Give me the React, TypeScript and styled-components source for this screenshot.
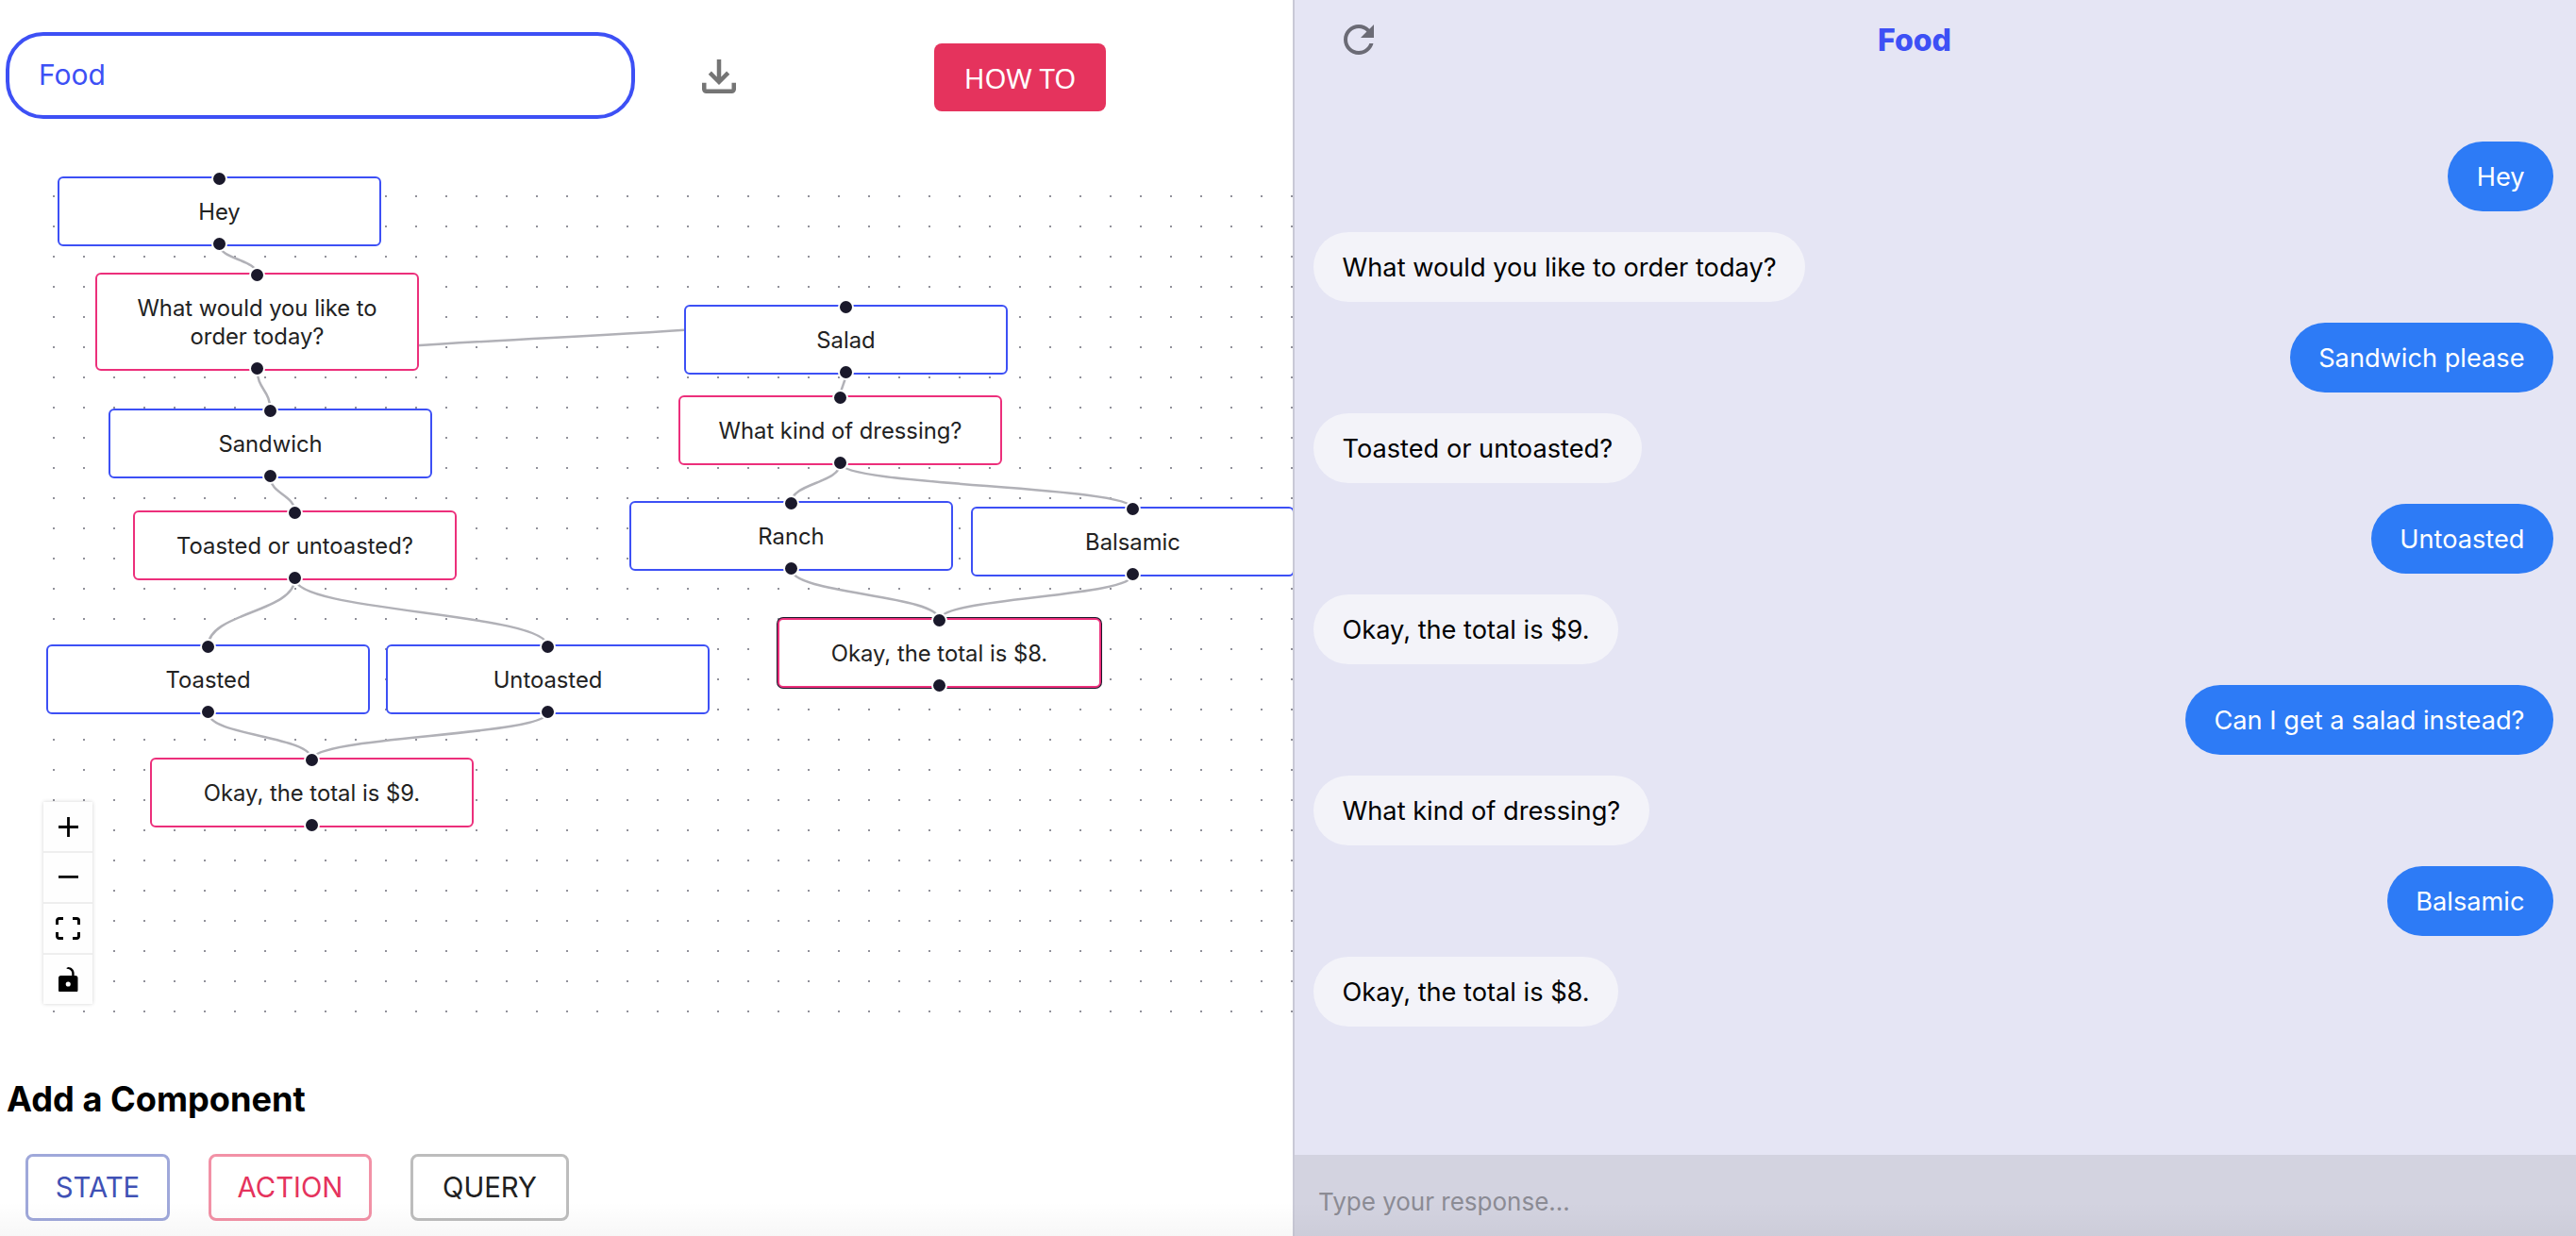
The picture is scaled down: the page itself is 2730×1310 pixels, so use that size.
import React from "react";
import styled, { createGlobalStyle } from "styled-components";

// canvas origin on the page, node coordinates below are page pixels
const ORIGIN_X = 28;
const ORIGIN_Y = 178;
const CANVAS_WIDTH = 1342;
const CANVAS_HEIGHT = 902;
const NODE_WIDTH = 343;

type NodeKind = "state" | "action";

interface FlowNodeData {
	id: string;
	kind: NodeKind;
	text: React.ReactNode;
	x: number;
	y: number;
	height: number;
	selected?: boolean;
}

const nodes: FlowNodeData[] = [
	{ id: "hey", kind: "state", text: "Hey", x: 61, y: 187, height: 74 },
	{ id: "order", kind: "action", text: <>What would you like to<br />order today?</>, x: 101, y: 289, height: 104 },
	{ id: "sandwich", kind: "state", text: "Sandwich", x: 115, y: 433, height: 74 },
	{ id: "toastedQ", kind: "action", text: "Toasted or untoasted?", x: 141, y: 541, height: 74 },
	{ id: "toasted", kind: "state", text: "Toasted", x: 49, y: 683, height: 74 },
	{ id: "untoasted", kind: "state", text: "Untoasted", x: 409, y: 683, height: 74 },
	{ id: "total9", kind: "action", text: "Okay, the total is $9.", x: 159, y: 803, height: 74 },
	{ id: "salad", kind: "state", text: "Salad", x: 725, y: 323, height: 74 },
	{ id: "dressing", kind: "action", text: "What kind of dressing?", x: 719, y: 419, height: 74 },
	{ id: "ranch", kind: "state", text: "Ranch", x: 667, y: 531, height: 74 },
	{ id: "balsamic", kind: "state", text: "Balsamic", x: 1029, y: 537, height: 74 },
	{ id: "total8", kind: "action", text: "Okay, the total is $8.", x: 824, y: 655, height: 74, selected: true },
];

const edges: [string, string][] = [
	["hey", "order"],
	["order", "sandwich"],
	["order", "salad"],
	["sandwich", "toastedQ"],
	["toastedQ", "toasted"],
	["toastedQ", "untoasted"],
	["toasted", "total9"],
	["untoasted", "total9"],
	["salad", "dressing"],
	["dressing", "ranch"],
	["dressing", "balsamic"],
	["ranch", "total8"],
	["balsamic", "total8"],
];

const messages: { from: "user" | "bot"; text: string }[] = [
	{ from: "user", text: "Hey" },
	{ from: "bot", text: "What would you like to order today?" },
	{ from: "user", text: "Sandwich please" },
	{ from: "bot", text: "Toasted or untoasted?" },
	{ from: "user", text: "Untoasted" },
	{ from: "bot", text: "Okay, the total is $9." },
	{ from: "user", text: "Can I get a salad instead?" },
	{ from: "bot", text: "What kind of dressing?" },
	{ from: "user", text: "Balsamic" },
	{ from: "bot", text: "Okay, the total is $8." },
];

const GlobalStyle = createGlobalStyle`
	html, body {
		margin: 0;
		padding: 0;
		background: #fff;
	}
	* {
		box-sizing: border-box;
	}
`;

const Page = styled.div`
	position: relative;
	display: grid;
	grid-template-columns: 1370px 1fr;
	width: 2730px;
	height: 1310px;
	overflow: hidden;
	font-family: Inter, "Liberation Sans", sans-serif;
`;

const BottomFade = styled.div`
	position: absolute;
	left: 0;
	right: 0;
	bottom: 0;
	height: 36px;
	background: linear-gradient(rgba(0, 0, 0, 0), rgba(0, 0, 0, 0.03));
	pointer-events: none;
`;

const Editor = styled.div`
	display: flex;
	flex-direction: column;
`;

const TopBar = styled.div`
	display: flex;
	align-items: center;
	height: 178px;
	padding: 0 0 16px 6px;
`;

const NameInput = styled.input`
	width: 667px;
	height: 92px;
	padding: 0 31px 3px;
	border: 4px solid #3d50f5;
	border-radius: 40px;
	outline: none;
	background: #fff;
	color: #3d50f5;
	font-family: inherit;
	font-size: 30px;
	margin-bottom: 2px;
`;

const IconButton = styled.button`
	display: flex;
	padding: 0;
	border: none;
	background: none;
	margin-left: 62px;
	margin-right: 201px;
	color: #757575;
`;

const HowToButton = styled.button`
	width: 182px;
	height: 72px;
	margin-top: 2px;
	border: none;
	border-radius: 8px;
	background: #e5335d;
	color: #fff;
	font-family: "Noto Sans", sans-serif;
	font-size: 29.5px;
`;

const Canvas = styled.div`
	position: relative;
	flex: none;
	width: ${CANVAS_WIDTH}px;
	height: ${CANVAS_HEIGHT}px;
	margin-left: ${ORIGIN_X}px;
	overflow: hidden;
	background-image: radial-gradient(circle, #91919a 1.1px, transparent 1.3px);
	background-size: 32px 32px;
	background-position: 13px 14px;
`;

const EdgeLayer = styled.svg`
	position: absolute;
	inset: 0;
	width: 100%;
	height: 100%;
`;

const Edge = styled.path`
	fill: none;
	stroke: #b1b1b7;
	stroke-width: 2.5;
`;

const Node = styled.div<{ $kind: NodeKind; $x: number; $y: number; $h: number; $selected?: boolean }>`
	position: absolute;
	left: ${(p) => p.$x - ORIGIN_X}px;
	top: ${(p) => p.$y - ORIGIN_Y}px;
	display: flex;
	align-items: center;
	justify-content: center;
	width: ${NODE_WIDTH}px;
	height: ${(p) => p.$h}px;
	padding-top: 1px;
	border: 2px solid ${(p) => (p.$kind === "state" ? "#3d50f5" : "#ec2f7b")};
	border-radius: 6px;
	background: #fff;
	color: #222;
	font-size: 23.8px;
	line-height: 30px;
	text-align: center;
	box-shadow: ${(p) => (p.$selected ? "0 0 0 1px #1a192b" : "none")};
`;

const Handle = styled.span<{ $side: "top" | "bottom" }>`
	position: absolute;
	left: 50%;
	${(p) => (p.$side === "top" ? "top: -8px;" : "bottom: -8px;")}
	width: 17px;
	height: 17px;
	margin-left: -8.5px;
	border: 2px solid #fff;
	border-radius: 50%;
	background: #1a192b;
`;

const Controls = styled.div`
	position: absolute;
	left: 18px;
	bottom: 16px;
	display: flex;
	flex-direction: column;
	width: 52px;
	box-shadow: 0 0 4px rgba(0, 0, 0, 0.18);
`;

const ControlButton = styled.button`
	display: flex;
	align-items: center;
	justify-content: center;
	width: 52px;
	height: 54px;
	padding: 0;
	border: none;
	border-bottom: 2px solid #eee;
	background: #fefefe;

	&:last-child {
		border-bottom: none;
		height: 52px;
	}
`;

const ControlIcon = styled.svg<{ $w: number }>`
	display: block;
	width: ${(p) => p.$w}px;
	fill: #000;
`;

const SectionTitle = styled.h2`
	margin: 64px 0 0 7px;
	color: #000;
	font-size: 36.2px;
	font-weight: 700;
	line-height: 42px;
`;

const Palette = styled.div`
	display: flex;
	gap: 41px;
	margin: 37px 0 0 27px;
`;

const paletteColors = {
	state: { text: "#3f51b5", border: "#9fa8da", width: 153 },
	action: { text: "#e5335d", border: "#f291a6", width: 173 },
	query: { text: "#212121", border: "#bdbdbd", width: 168 },
};

const PaletteButton = styled.button<{ $kind: keyof typeof paletteColors }>`
	width: ${(p) => paletteColors[p.$kind].width}px;
	height: 71px;
	padding: 0;
	border: 3px solid ${(p) => paletteColors[p.$kind].border};
	border-radius: 8px;
	background: #fff;
	color: ${(p) => paletteColors[p.$kind].text};
	font-family: inherit;
	font-size: 29.3px;
`;

const Chat = styled.div`
	display: flex;
	flex-direction: column;
	border-left: 2px solid #c9c9d6;
	background: #e5e5f4;
`;

const ChatHeader = styled.div`
	display: flex;
	align-items: center;
	height: 84px;
	padding-left: 44px;
	color: #6b6b75;
`;

const ChatTitle = styled.div`
	margin-left: 526px;
	color: #3d50f5;
	font-size: 32px;
	font-weight: 800;
`;

const MessageList = styled.div`
	display: flex;
	flex: 1;
	flex-direction: column;
	gap: 22px;
	padding: 66px 24px 0 20px;
`;

const Bubble = styled.div<{ $from: "user" | "bot" }>`
	display: flex;
	align-items: center;
	align-self: ${(p) => (p.$from === "user" ? "flex-end" : "flex-start")};
	height: 74px;
	padding: 0 30.5px;
	border-radius: 37px;
	background: ${(p) => (p.$from === "user" ? "#2d7bf6" : "#f3f3f9")};
	color: ${(p) => (p.$from === "user" ? "#fff" : "#000")};
	font-size: 27.2px;
`;

const ReplyBar = styled.div`
	height: 86px;
	padding: 0 25px;
	background: #d3d3e0;
`;

const ReplyInput = styled.input`
	width: 100%;
	height: 100%;
	padding: 13px 0 0;
	border: none;
	outline: none;
	background: transparent;
	font-family: inherit;
	font-size: 26px;

	&::placeholder {
		color: #8b8b94;
	}
`;

const byId = (id: string) => nodes.find((n) => n.id === id) as FlowNodeData;

const edgePath = (from: string, to: string) => {
	const s = byId(from);
	const t = byId(to);
	const sx = s.x + NODE_WIDTH / 2;
	const sy = s.y + s.height - 2;
	const tx = t.x + NODE_WIDTH / 2;
	const ty = t.y + 2;
	const midY = (sy + ty) / 2;
	return `M${sx},${sy} C${sx},${midY} ${tx},${midY} ${tx},${ty}`;
};

const App = () => {
	return (
		<Page>
			<GlobalStyle />
			<Editor>
				<TopBar>
					<NameInput defaultValue="Food" />
					<IconButton aria-label="Download">
						<svg width="54" height="54" viewBox="0 0 24 24" fill="currentColor">
							<path d="M18 15v3H6v-3H4v3c0 1.1.9 2 2 2h12c1.1 0 2-.9 2-2v-3h-2zm-1-4-1.41-1.41L13 12.17V4h-2v8.17L8.41 9.59 7 11l5 5 5-5z" />
						</svg>
					</IconButton>
					<HowToButton>HOW TO</HowToButton>
				</TopBar>
				<Canvas>
					<EdgeLayer viewBox={`${ORIGIN_X} ${ORIGIN_Y} ${CANVAS_WIDTH} ${CANVAS_HEIGHT}`}>
						{edges.map(([from, to]) => (
							<Edge key={from + to} d={edgePath(from, to)} />
						))}
					</EdgeLayer>
					{nodes.map((n) => (
						<Node key={n.id} $kind={n.kind} $x={n.x} $y={n.y} $h={n.height} $selected={n.selected}>
							<Handle $side="top" />
							<span>{n.text}</span>
							<Handle $side="bottom" />
						</Node>
					))}
					<Controls>
						<ControlButton aria-label="Zoom in">
							<ControlIcon $w={21} viewBox="0 0 32 32">
								<path d="M32 18.133H18.133V32h-4.266V18.133H0v-4.266h13.867V0h4.266v13.867H32z" />
							</ControlIcon>
						</ControlButton>
						<ControlButton aria-label="Zoom out">
							<ControlIcon $w={21} viewBox="0 0 32 5">
								<path d="M0 0h32v4.2H0z" />
							</ControlIcon>
						</ControlButton>
						<ControlButton aria-label="Fit view">
							<ControlIcon $w={26} viewBox="0 0 32 30">
								<path d="M3.692 4.63c0-.53.4-.938.939-.938h5.215V0H4.708C2.13 0 0 2.054 0 4.63v5.216h3.692V4.631zM27.354 0h-5.2v3.692h5.17c.53 0 .984.4.984.939v5.215H32V4.631A4.624 4.624 0 0027.354 0zm.954 24.83c0 .532-.4.94-.939.94h-5.215v3.768h5.215c2.577 0 4.631-2.13 4.631-4.707v-5.139h-3.692v5.139zm-23.677.94c-.531 0-.939-.4-.939-.94v-5.138H0v5.139c0 2.577 2.13 4.707 4.708 4.707h5.138V25.77H4.631z" />
							</ControlIcon>
						</ControlButton>
						<ControlButton aria-label="Toggle interactivity">
							<ControlIcon $w={21} viewBox="0 0 25 32">
								<path d="M21.333 10.667H19.81V7.619C19.81 3.429 16.38 0 12.19 0c-4.114 1.828-1.37 2.133.305 2.438 1.676.305 4.42 2.59 4.42 5.181v3.048H3.047A3.056 3.056 0 000 13.714v15.238A3.056 3.056 0 003.048 32h18.285a3.056 3.056 0 003.048-3.048V13.714a3.056 3.056 0 00-3.048-3.047zM12.19 24.533a3.056 3.056 0 01-3.047-3.047 3.056 3.056 0 013.047-3.048 3.056 3.056 0 013.048 3.048 3.056 3.056 0 01-3.048 3.047z" />
							</ControlIcon>
						</ControlButton>
					</Controls>
				</Canvas>
				<SectionTitle>Add a Component</SectionTitle>
				<Palette>
					<PaletteButton $kind="state">STATE</PaletteButton>
					<PaletteButton $kind="action">ACTION</PaletteButton>
					<PaletteButton $kind="query">QUERY</PaletteButton>
				</Palette>
			</Editor>
			<Chat>
				<ChatHeader>
					<svg width="48" height="48" viewBox="0 0 24 24" fill="currentColor">
						<path d="M17.65 6.35C16.2 4.9 14.21 4 12 4c-4.42 0-7.99 3.58-7.99 8s3.57 8 7.99 8c3.73 0 6.84-2.55 7.73-6h-2.08c-.82 2.33-3.04 4-5.65 4-3.31 0-6-2.69-6-6s2.69-6 6-6c1.66 0 3.14.69 4.22 1.78L13 11h7V4l-2.35 2.35z" />
					</svg>
					<ChatTitle>Food</ChatTitle>
				</ChatHeader>
				<MessageList>
					{messages.map((m, i) => (
						<Bubble key={i} $from={m.from}>{m.text}</Bubble>
					))}
				</MessageList>
				<ReplyBar>
					<ReplyInput placeholder="Type your response..." />
				</ReplyBar>
			</Chat>
			<BottomFade />
		</Page>
	);
};

export default App;
